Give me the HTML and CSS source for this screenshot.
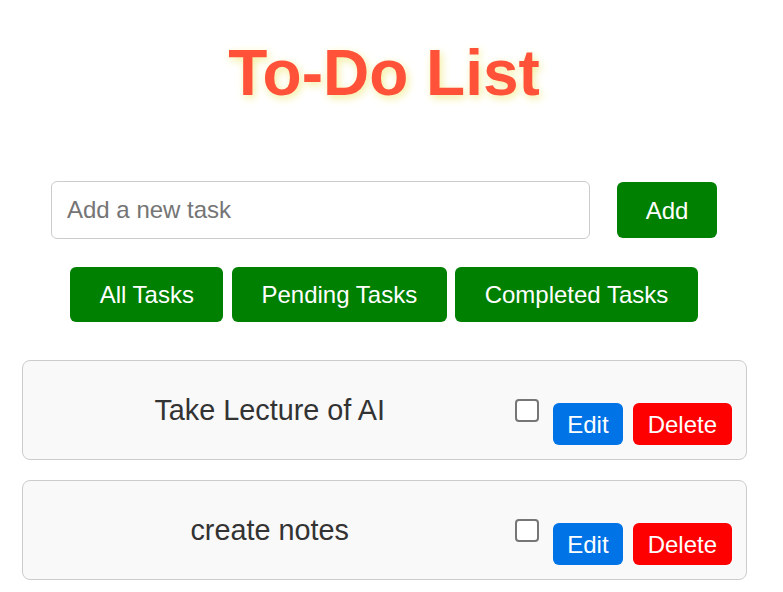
FILE: index.html
```html
<!DOCTYPE html>
<html lang="en">
<head>
<meta charset="utf-8">
<title>To-Do List</title>
<link rel="stylesheet" href="styles.css">
</head>
<body>
<div class="page">
  <h1 class="title">To-Do List</h1>
  <div class="add-row">
    <input class="task-input" type="text" placeholder="Add a new task">
    <button class="btn btn-green add-btn">Add</button>
  </div>
  <div class="filters">
    <button class="btn btn-green filter-btn">All Tasks</button>
    <button class="btn btn-green filter-btn">Pending Tasks</button>
    <button class="btn btn-green filter-btn">Completed Tasks</button>
  </div>
  <ul class="task-list">
    <li class="task">
      <span class="task-text">Take Lecture of AI</span>
      <input class="task-check" type="checkbox">
      <div class="task-actions">
        <button class="btn btn-small btn-blue">Edit</button>
        <button class="btn btn-small btn-red">Delete</button>
      </div>
    </li>
    <li class="task">
      <span class="task-text">create notes</span>
      <input class="task-check" type="checkbox">
      <div class="task-actions">
        <button class="btn btn-small btn-blue">Edit</button>
        <button class="btn btn-small btn-red">Delete</button>
      </div>
    </li>
  </ul>
</div>
</body>
</html>
```

FILE: styles.css
```css
html, body {
  margin: 0;
  padding: 0;
  background: #ffffff;
}

body {
  font-family: "Liberation Sans", Arial, sans-serif;
}

.page {
  width: 768px;
  display: flex;
  flex-direction: column;
  align-items: center;
}

.title {
  margin: 0;
  padding-top: 36px;
  font-size: 64px;
  line-height: 74px;
  font-weight: bold;
  color: #ff5238;
  text-shadow: 2px 3px 8px #f3ee9a;
}

.add-row {
  margin-top: 71px;
  display: flex;
  align-items: center;
  gap: 27px;
}

.task-input {
  box-sizing: border-box;
  width: 539px;
  height: 58px;
  padding: 0 15px;
  border: 1px solid #cccccc;
  border-radius: 6px;
  font-family: "Liberation Sans", Arial, sans-serif;
  font-size: 24px;
  color: #333;
  outline: none;
}

.task-input::placeholder {
  color: #757575;
}

.btn {
  border: none;
  color: #ffffff;
  font-family: "Liberation Sans", Arial, sans-serif;
  font-size: 24px;
  line-height: 27px;
  border-radius: 6px;
  cursor: pointer;
}

.btn-green {
  background: #008000;
}

.add-btn {
  width: 100px;
  height: 56px;
  padding: 0;
}

.filters {
  margin-top: 28px;
  display: flex;
  gap: 8.5px;
}

.filter-btn {
  padding: 14px 29.5px;
}

.task-list {
  list-style: none;
  margin: 38px 0 0 0;
  padding: 0;
  display: flex;
  flex-direction: column;
  gap: 20px;
}

.task {
  box-sizing: border-box;
  width: 725px;
  height: 100px;
  padding: 0 14px 0 15px;
  display: flex;
  align-items: center;
  background: #f9f9f9;
  border: 1px solid #cccccc;
  border-radius: 8px;
}

.task-text {
  flex: 1;
  text-align: center;
  font-size: 28.8px;
  color: #333333;
}

.task-check {
  appearance: none;
  -webkit-appearance: none;
  box-sizing: border-box;
  width: 24px;
  height: 23px;
  margin: 0 14px 0 13px;
  border: 2px solid #767676;
  border-radius: 4px;
  background: #ffffff;
}

.task-actions {
  margin-top: 28px;
  display: flex;
  gap: 10px;
}

.btn-small {
  padding: 7.5px 14.5px;
}

.btn-blue {
  background: #0073e6;
}

.btn-red {
  background: #ff0000;
}
```
